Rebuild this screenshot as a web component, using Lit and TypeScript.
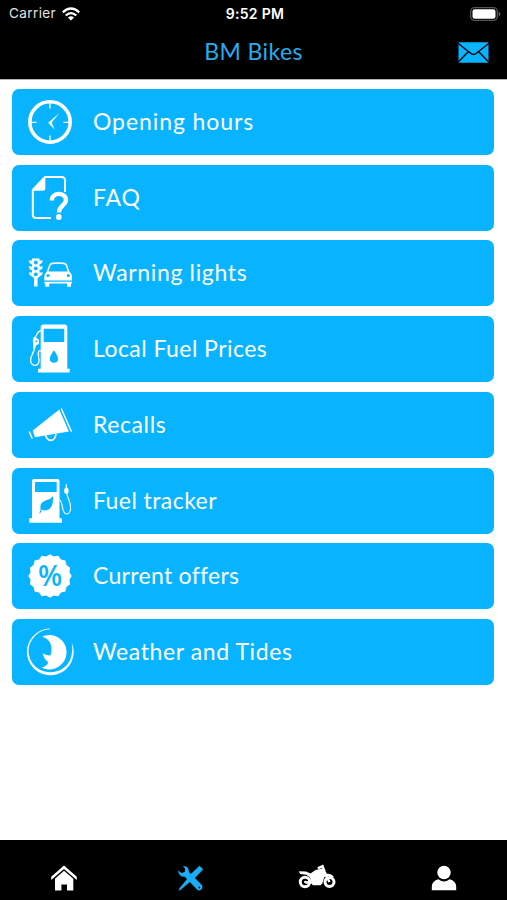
import { LitElement, html, svg, css } from "lit";
import { customElement } from "lit/decorators.js";

const BLUE = "#08b4ff";

const badge = Array.from({ length: 32 }, (_, i) => {
  const r = i % 2 ? 19.8 : 21.8;
  const a = (i * Math.PI) / 16 + Math.PI / 2;
  return `${(28 + r * Math.cos(a)).toFixed(2)},${(33 + r * Math.sin(a)).toFixed(2)}`;
}).join(" ");

const icons = {
  clock: svg`
    <circle cx="28" cy="33" r="20.2" fill="none" stroke="#fff" stroke-width="3.6"/>
    <path d="M28 14v5.5M28 46.5V52M9 33.3h5.5M41.5 33.3H47" stroke="#fff" stroke-width="1.3"/>
    <path d="M37.6 24 29.6 33.6 32.6 40.6 26.2 33.7Z" fill="#fff"/>`,
  faq: svg`
    <path d="M43 27V15.500Q43 12 39.500 12H23L10.800 25V49.500Q10.800 53 14.300 53H29" fill="none" stroke="#fff" stroke-width="2"/>
    <path d="M10.300 25.800 23.300 12V23.300Q23.300 25.800 20.800 25.800Z" fill="#fff"/>
    <path d="M29.800 35.500C29.500 26.800 44 26.800 44 35C44 40 37 40.500 37 47.500" fill="none" stroke="#fff" stroke-width="4.400"/>
    <circle cx="36.800" cy="52" r="2.900" fill="#fff"/>`,
  lights: svg`
    <path d="M10 18.500h7.500v2h3.300q-.3 3-3.300 3.900v2h3.300q-.3 3-3.300 3.900v2.200h3.300q-.3 3-3.300 3.900l-2 2v8h-3.400v-8l-2-2q-3-.9-3.300-3.900H10v-2.200q-3-.9-3.300-3.900H10v-2q-3-.9-3.300-3.900H10Z" fill="#fff"/>
    <g fill="${BLUE}"><circle cx="13.800" cy="22.500" r="1.900"/><circle cx="13.800" cy="28.400" r="1.900"/><circle cx="13.800" cy="34.300" r="1.900"/></g>
    <path d="M25 33.500 27.800 25.200Q28.500 23.600 30.200 23.400 36 22.600 42 23.400 43.700 23.600 44.400 25.200L47.200 33.500" fill="none" stroke="#fff" stroke-width="1.600"/>
    <path d="M25 31.500H47.300Q50 33.500 50 37V40.500H22.300V37Q22.300 33.500 25 31.500ZM22.300 41.800H50V43.400H49V46.800H45V43.400H27.300V46.800H23.300V43.400H22.300Z" fill="#fff"/>
    <g fill="${BLUE}"><circle cx="26" cy="35.600" r="1.500"/><circle cx="46.300" cy="35.600" r="1.500"/></g>`,
  pump: svg`
    <path d="M21.300 8.500H42.700Q45.300 8.500 45.300 11V52.800H47.700V56.600H16V52.800H18.700V11Q18.700 8.500 21.300 8.500ZM21.700 12.800V26.100H42.300V12.800Z" fill="#fff" fill-rule="evenodd"/>
    <path d="M31.900 34.300Q36 40 36 42.700A4.100 4.100 0 0 1 27.800 42.700Q27.800 40 31.900 34.300Z" fill="${BLUE}"/>
    <path d="M19 14.300Q14.500 16 12.700 24M12.500 31C12.500 37 8 40 8.600 44.500 9.300 50.500 15 50.800 16.800 46.500 18 42.500 14.700 38 17 34.800H19" fill="none" stroke="#fff" stroke-width="1.300"/>
    <path d="M12 20.500 16.800 23.500 17 27.800 14 29.500 13 33 11.300 32.800 10.800 24Z" fill="#fff"/>
    <circle cx="14.400" cy="25.400" r=".9" fill="${BLUE}"/>`,
  horn: svg`
    <path d="M10.700 38.500 37.300 17.500 46.900 39.400 12.900 45.300Z" fill="#fff"/>
    <path d="M39.200 16.500 49.400 39.500M7.200 39.500 10.200 46.500" stroke="#fff" stroke-width="1.500"/>
    <path d="M23.600 43Q25 48.400 29 48.400 33.300 48 33.900 42" fill="none" stroke="#fff" stroke-width="1.600"/>`,
  eco: svg`
    <path d="M12 11H35.500Q37.500 11 37.500 13V50.300H40V54.700H7.300V50.300H10V13Q10 11 12 11ZM13 14V24.100H34.700V14Z" fill="#fff" fill-rule="evenodd"/>
    <path d="M17.300 45.300 18.700 41.300Q17 35 23.500 32.500 28.500 31.500 31 28.300 31.700 40.500 24.500 42.300 21.500 42.800 19.800 41.500L18.300 45.300Z" fill="${BLUE}"/>
    <path d="M37.500 32C41.500 33 39 45.800 44.500 46 50 46 49 37 46.800 31.500 45.800 29 45 28 44.700 25" fill="none" stroke="#fff" stroke-width="1.100"/>
    <path d="M43.800 16.300H45V19.500L46.500 21V24.500L45.200 25.800H43.500L42.200 24.500V21L43.800 19.500Z" fill="#fff"/>`,
  offer: svg`
    <polygon points="${badge}" fill="#fff"/>
    <text x="28" y="43" class="pct" text-anchor="middle">%</text>`,
  weather: svg`
    <path d="M28 9.500A23.400 23.400 0 1 0 49.500 23 24 24 0 0 1 50 33 21.300 21.300 0 0 1 28.500 53.300 21.500 21.500 0 0 1 6.500 32 22.500 22.500 0 0 1 28 10.200Z" fill="#fff"/>
    <path d="M20 17.500A17.300 17.300 0 1 1 19.600 48.700Q26.500 46.500 26 42.800 22.300 41 20.600 34.300 24 36.800 28.600 36.300 32.500 22 20 17.500Z" fill="#fff"/>`,
};

const rows: { label: string; icon: keyof typeof icons; track: number }[] = [
  { label: "Opening hours", icon: "clock", track: 0.92 },
  { label: "FAQ", icon: "faq", track: 0.8 },
  { label: "Warning lights", icon: "lights", track: 0.65 },
  { label: "Local Fuel Prices", icon: "pump", track: 0.45 },
  { label: "Recalls", icon: "horn", track: 0.6 },
  { label: "Fuel tracker", icon: "eco", track: 0.43 },
  { label: "Current offers", icon: "offer", track: 0.3 },
  { label: "Weather and Tides", icon: "weather", track: 0.6 },
];

@customElement("app-root")
export class AppRoot extends LitElement {
  static styles = css`
    :host {
      display: flex;
      flex-direction: column;
      height: 900px;
      background: #fff;
      font-family: Lato, "Liberation Sans", sans-serif;
      color: #fff;
      overflow: hidden;
    }
    svg { display: block; }
    header {
      height: 79px;
      flex: none;
      background: #000;
      border-bottom: 1px solid #b4b4b4;
      box-sizing: content-box;
    }
    .status, .title {
      display: grid;
      grid-template-columns: 1fr auto 1fr;
      align-items: center;
    }
    .status {
      height: 27px;
      padding: 0 6px 0 9px;
      font: 13.5px/27px Inter, sans-serif;
    }
    .carrier { display: flex; align-items: center; gap: 6px; color: #e2e2e2; letter-spacing: 0.4px; }
    .time { font-size: 14px; font-weight: 600; letter-spacing: 0.3px; }
    .end { justify-self: end; }
    .title { height: 50px; padding: 0 18px; }
    h1 {
      grid-column: 2;
      margin: 0;
      font-size: 23px;
      line-height: 48px;
      padding-bottom: 2px;
      font-weight: 400;
      letter-spacing: 0.4px;
      color: #23aeef;
    }
    main {
      flex: 1;
      display: flex;
      flex-direction: column;
      gap: 9.75px;
      padding: 8.8px 13.5px 0 12px;
    }
    .row {
      height: 66px;
      display: flex;
      align-items: center;
      gap: 15px;
      padding-left: 10px;
      border-radius: 7px;
      background: #08b4ff;
      font-size: 23px;
      white-space: nowrap;
    }
    .label { padding-bottom: 2px; }
    .pct { font: 600 28px "Open Sans", sans-serif; fill: #08b4ff; }
    nav {
      flex: none;
      height: 60px;
      box-sizing: border-box;
      padding-top: 18px;
      display: grid;
      grid-template-columns: repeat(4, 1fr);
      justify-items: center;
      align-items: start;
      background: #000;
    }
  `;

  render() {
    return html`
      <header>
        <div class="status">
          <span class="carrier">Carrier
            <svg width="18" height="14" viewBox="0 0 18 14" fill="none" stroke="#fff" stroke-width="2.300">
              <path d="M.8 5.300Q9-2.300 17.200 5.300M3.700 8.500Q9 3.700 14.300 8.500"/>
              <path d="M9 13.500 5.900 10.400Q9 8 12.100 10.400Z" fill="#fff" stroke="none"/>
            </svg>
          </span>
          <span class="time">9:52 PM</span>
          <svg class="end" width="31" height="14" viewBox="0 0 31 14">
            <rect x=".7" y=".7" width="26.600" height="12.600" rx="3.800" fill="none" stroke="#555" stroke-width="1.300"/>
            <rect x="2.500" y="2.300" width="23" height="9.400" rx="2.200" fill="#fff"/>
            <path d="M28.700 4.700Q30.500 5.500 30.500 7T28.700 9.300Z" fill="#666"/>
          </svg>
        </div>
        <div class="title">
          <h1>BM Bikes</h1>
          <svg class="end" width="31" height="21" viewBox="0 0 31 21">
            <rect x=".5" y=".3" width="30" height="20.400" rx="1" fill="#08b4ff"/>
            <path d="M0 1.200 12.300 11Q15.500 14 18.700 11L31 1.200M.5 19.800 10.500 9.600M30.500 19.800 20.500 9.600" fill="none" stroke="#000" stroke-width="1.400"/>
          </svg>
        </div>
      </header>
      <main>
        ${rows.map(
          (r) => html`<div class="row">
            <svg width="56" height="66" viewBox="0 0 56 66">${icons[r.icon]}</svg>
            <span class="label" style="letter-spacing:${r.track}px">${r.label}</span>
          </div>`
        )}
      </main>
      <nav>
        <svg width="40" height="40" viewBox="0 0 40 40" fill="#fff">
          <path d="M21 7.500 33.800 18.700V22L21 11 8.200 22V18.700Z"/>
          <path d="M21 12.800 30.300 20.700V32.500H24V26.500H18.400V32.500H12V20.700Z"/>
        </svg>
        <svg width="40" height="40" viewBox="0 0 40 40">
          <g fill="#18adf5">
            <path d="M13 8Q18.800 7.500 19 14L32.300 27.500Q33 32.500 28 32.600L14.800 18.800Q8.800 19 8 12.500L11.800 15.300 15 13.500 15 10.500Z"/>
            <path d="M29.500 7.700 33.200 11.300 24 21 19.800 17Z"/>
            <path d="M18.200 19.800 21.200 22.700 11 31.400 8.500 32.700 9.800 29.800Z"/>
          </g>
          <circle cx="29.300" cy="29.500" r=".9" fill="#000"/>
        </svg>
        <svg width="40" height="40" viewBox="0 0 40 40">
          <g fill="none" stroke="#fff">
            <circle cx="8" cy="24" r="4.700" stroke-width="3"/>
            <circle cx="32.500" cy="24" r="4.500" stroke-width="3"/>
            <path d="M26.500 13 32.500 24M20.800 10.300 25.500 8.200 27.500 13.500M8.500 24.500H18" stroke-width="2.500"/>
          </g>
          <path d="M2 13.200 9 13.600 13.500 15.500 18.500 12 25.500 10.500 29.500 14.500 27.500 18.500 25.300 25.500 23.500 27.300H15.500L13 19.500 9.500 16.800 3 16Z" fill="#fff"/>
          <path d="M26.500 16Q32.500 14.300 37 18.500L34.500 19.500Q31 17.500 27 19Z" fill="#fff"/>
          <circle cx="8.300" cy="24" r="1.200" fill="#fff"/>
        </svg>
        <svg width="40" height="40" viewBox="0 0 40 40" fill="#fff">
          <circle cx="20" cy="14.500" r="6.700"/>
          <path d="M7.800 32.300V28.500Q8 23 14.500 21.300 20 25.700 25.500 21.300 32 23 32.200 28.500V32.300Z"/>
        </svg>
      </nav>
    `;
  }
}
